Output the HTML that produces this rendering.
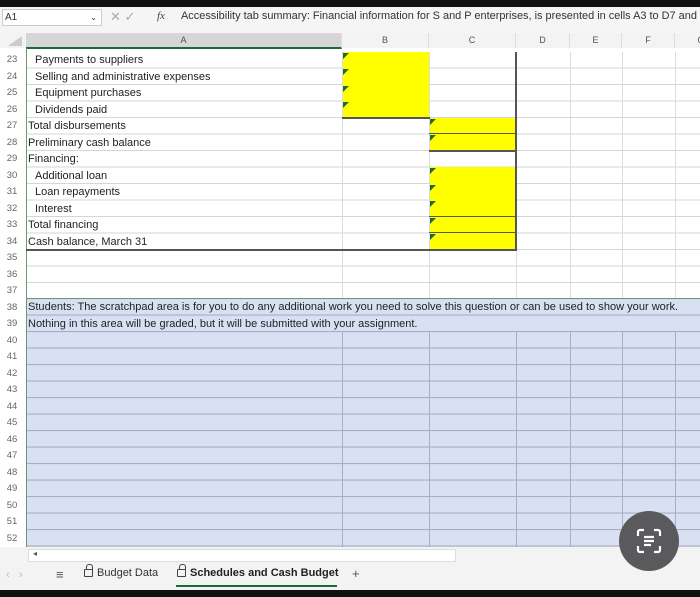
<!DOCTYPE html>
<html><head><style>
*{margin:0;padding:0;box-sizing:border-box}
body{width:700px;height:597px;overflow:hidden;background:#fff;font-family:"Liberation Sans",sans-serif;position:relative}
.a{position:absolute}
.t{font-size:11px;color:#222;white-space:nowrap;line-height:16.5px}
.rn{position:absolute;left:0;width:24px;text-align:center;font-size:9.5px;color:#666;line-height:16.5px}
.y{position:absolute;background:#ffff00}
.tri{position:absolute;width:0;height:0;border-top:6px solid #1e6b3a;border-right:6px solid transparent}
.hl{position:absolute;height:2px;background:#555}
.vl{position:absolute;width:1px;background:#dcdcdc}
.ch{position:absolute;top:33px;height:15px;font-size:9px;color:#555;text-align:center;line-height:15px;border-right:1px solid #ddd}
.lk{display:inline-block;width:9px;height:8px;border:1.3px solid #444;border-radius:1px;margin-right:4px;position:relative;top:1px}
.lk:before{content:"";position:absolute;left:0.5px;top:-6px;width:5px;height:5px;border:1.3px solid #444;border-bottom:none;border-radius:3px 3px 0 0}
</style></head><body>
<div class="a" style="left:0;top:0;width:700px;height:7px;background:#111"></div>
<div class="a" style="left:0;top:7px;width:700px;height:26px;background:#f5f5f5"></div>
<div class="a" style="left:2px;top:9px;width:100px;height:17px;background:#fff;border:1px solid #ccc;font-size:10px;color:#333;line-height:15px;padding-left:2px">A1<span style="position:absolute;right:4px;font-size:8px">⌄</span></div>
<div class="a" style="left:110px;top:9px;font-size:13px;color:#aaa">✕ ✓</div>
<div class="a" style="left:157px;top:10px;font-size:11px;color:#444;font-style:italic;font-family:'Liberation Serif',serif">fx</div>
<div class="a t" style="left:181px;top:8px;color:#333;font-size:10.95px">Accessibility tab summary: Financial information for S and P enterprises, is presented in cells A3 to D7 and</div>
<div class="a" style="left:0;top:33px;width:700px;height:15px;background:#f3f3f3"></div>
<div class="a" style="left:8px;top:36px;width:0;height:0;border-bottom:10px solid #ccc;border-left:14px solid transparent"></div>
<div class="ch" style="left:26px;width:316px;background:#d6d6d6;border-bottom:2px solid #1e6b3a;height:16px">A</div>
<div class="ch" style="left:342px;width:87px">B</div>
<div class="ch" style="left:429px;width:87px">C</div>
<div class="ch" style="left:516px;width:54px">D</div>
<div class="ch" style="left:570px;width:52px">E</div>
<div class="ch" style="left:622px;width:53px">F</div>
<div class="ch" style="left:675px;width:30px;text-align:right">C</div>
<div class="a" style="left:26px;top:299px;width:674px;height:248px;background:#d9e0f3"></div>
<div class="a" style="left:26px;top:52px;width:674px;height:495px;background:repeating-linear-gradient(to bottom,transparent 0,transparent 15.5px,#d6d6d6 15.5px,#d6d6d6 16.5px)"></div>
<div class="a" style="left:26px;top:299px;width:674px;height:248px;background:repeating-linear-gradient(to bottom,transparent 0,transparent 15.5px,#a5aec8 15.5px,#a5aec8 16.5px)"></div>
<div class="vl" style="left:342px;top:52px;height:247px"></div>
<div class="vl" style="left:429px;top:52px;height:247px"></div>
<div class="vl" style="left:516px;top:52px;height:247px"></div>
<div class="vl" style="left:570px;top:52px;height:247px"></div>
<div class="vl" style="left:622px;top:52px;height:247px"></div>
<div class="vl" style="left:675px;top:52px;height:247px"></div>
<div class="vl" style="left:342px;top:332px;height:215px;background:#a5aec8"></div>
<div class="vl" style="left:429px;top:332px;height:215px;background:#a5aec8"></div>
<div class="vl" style="left:516px;top:332px;height:215px;background:#a5aec8"></div>
<div class="vl" style="left:570px;top:332px;height:215px;background:#a5aec8"></div>
<div class="vl" style="left:622px;top:332px;height:215px;background:#a5aec8"></div>
<div class="vl" style="left:675px;top:332px;height:215px;background:#a5aec8"></div>
<div class="a" style="left:26px;top:298px;width:674px;height:1px;background:#6a9a6a"></div>
<div class="a" style="left:26px;top:48px;width:1px;height:500px;background:#6a9a6a"></div>
<div class="y" style="left:343px;top:52px;width:86px;height:66px"></div>
<div class="y" style="left:430px;top:118px;width:86px;height:33px"></div>
<div class="y" style="left:430px;top:167px;width:86px;height:83px"></div>
<div class="tri" style="left:343px;top:53px"></div>
<div class="tri" style="left:343px;top:69px"></div>
<div class="tri" style="left:343px;top:86px"></div>
<div class="tri" style="left:343px;top:102px"></div>
<div class="tri" style="left:430px;top:119px"></div>
<div class="tri" style="left:430px;top:135px"></div>
<div class="tri" style="left:430px;top:168px"></div>
<div class="tri" style="left:430px;top:185px"></div>
<div class="tri" style="left:430px;top:201px"></div>
<div class="tri" style="left:430px;top:218px"></div>
<div class="tri" style="left:430px;top:234px"></div>
<div class="hl" style="left:342px;top:117px;width:88px"></div>
<div class="hl" style="left:429px;top:133px;width:88px;height:1px"></div>
<div class="hl" style="left:429px;top:150px;width:88px"></div>
<div class="hl" style="left:429px;top:216px;width:88px;height:1px"></div>
<div class="hl" style="left:429px;top:232px;width:88px;height:1px"></div>
<div class="hl" style="left:26px;top:249px;width:491px"></div>
<div class="a" style="left:515px;top:52px;width:2px;height:199px;background:#555"></div>
<div class="a t" style="left:35px;top:52px">Payments to suppliers</div>
<div class="a t" style="left:35px;top:68.5px">Selling and administrative expenses</div>
<div class="a t" style="left:35px;top:85px">Equipment purchases</div>
<div class="a t" style="left:35px;top:101.5px">Dividends paid</div>
<div class="a t" style="left:28px;top:118px">Total disbursements</div>
<div class="a t" style="left:28px;top:134.5px">Preliminary cash balance</div>
<div class="a t" style="left:28px;top:151px">Financing:</div>
<div class="a t" style="left:35px;top:167.5px">Additional loan</div>
<div class="a t" style="left:35px;top:184px">Loan repayments</div>
<div class="a t" style="left:35px;top:200.5px">Interest</div>
<div class="a t" style="left:28px;top:217px">Total financing</div>
<div class="a t" style="left:28px;top:233.5px">Cash balance, March 31</div>
<div class="a t" style="left:28px;top:299px;font-size:11.05px">Students: The scratchpad area is for you to do any additional work you need to solve this question or can be used to show your work.</div>
<div class="a t" style="left:28px;top:315.5px;font-size:11px">Nothing in this area will be graded, but it will be submitted with your assignment.</div>
<div class="rn" style="top:52px">23</div><div class="rn" style="top:68.5px">24</div><div class="rn" style="top:85px">25</div><div class="rn" style="top:101.5px">26</div><div class="rn" style="top:118px">27</div><div class="rn" style="top:134.5px">28</div><div class="rn" style="top:151px">29</div><div class="rn" style="top:167.5px">30</div><div class="rn" style="top:184px">31</div><div class="rn" style="top:200.5px">32</div><div class="rn" style="top:217px">33</div><div class="rn" style="top:233.5px">34</div><div class="rn" style="top:250px">35</div><div class="rn" style="top:266.5px">36</div><div class="rn" style="top:283px">37</div><div class="rn" style="top:299.5px">38</div><div class="rn" style="top:316px">39</div><div class="rn" style="top:332.5px">40</div><div class="rn" style="top:349px">41</div><div class="rn" style="top:365.5px">42</div><div class="rn" style="top:382px">43</div><div class="rn" style="top:398.5px">44</div><div class="rn" style="top:415px">45</div><div class="rn" style="top:431.5px">46</div><div class="rn" style="top:448px">47</div><div class="rn" style="top:464.5px">48</div><div class="rn" style="top:481px">49</div><div class="rn" style="top:497.5px">50</div><div class="rn" style="top:514px">51</div><div class="rn" style="top:530.5px">52</div>
<div class="a" style="left:0;top:547px;width:700px;height:43px;background:#f3f3f3"></div>
<div class="a" style="left:28px;top:549px;width:428px;height:13px;background:#fff;border:1px solid #ddd"></div>
<div class="a" style="left:33px;top:549px;font-size:8px;color:#555">◂</div>
<div class="a" style="left:6px;top:569px;font-size:11px;color:#bbb">‹ &nbsp; ›</div>
<div class="a" style="left:56px;top:567px;font-size:13px;color:#555">≡</div>
<div class="a" style="left:84px;top:567px;font-size:11px;color:#333;white-space:nowrap"><span class="lk"></span>Budget Data</div>
<div class="a" style="left:177px;top:567px;font-size:11px;color:#222;font-weight:bold;white-space:nowrap"><span class="lk"></span>Schedules and Cash Budget</div>
<div class="a" style="left:176px;top:585px;width:161px;height:2px;background:#1e6b3a"></div>
<div class="a" style="left:352px;top:566px;font-size:13px;color:#555">+</div>
<div class="a" style="left:619px;top:511px;width:60px;height:60px;border-radius:50%;background:#5a5a5c"></div>
<svg class="a" style="left:633px;top:525px" width="32" height="32" viewBox="0 0 32 32" fill="none" stroke="#fff" stroke-width="2.2"><path d="M5 11V7a2 2 0 0 1 2-2h4M21 5h4a2 2 0 0 1 2 2v4M27 21v4a2 2 0 0 1-2 2h-4M11 27H7a2 2 0 0 1-2-2v-4M11 12h10M11 16h10M11 20h7"/></svg>
<div class="a" style="left:0;top:590px;width:700px;height:7px;background:#111"></div>
</body></html>
